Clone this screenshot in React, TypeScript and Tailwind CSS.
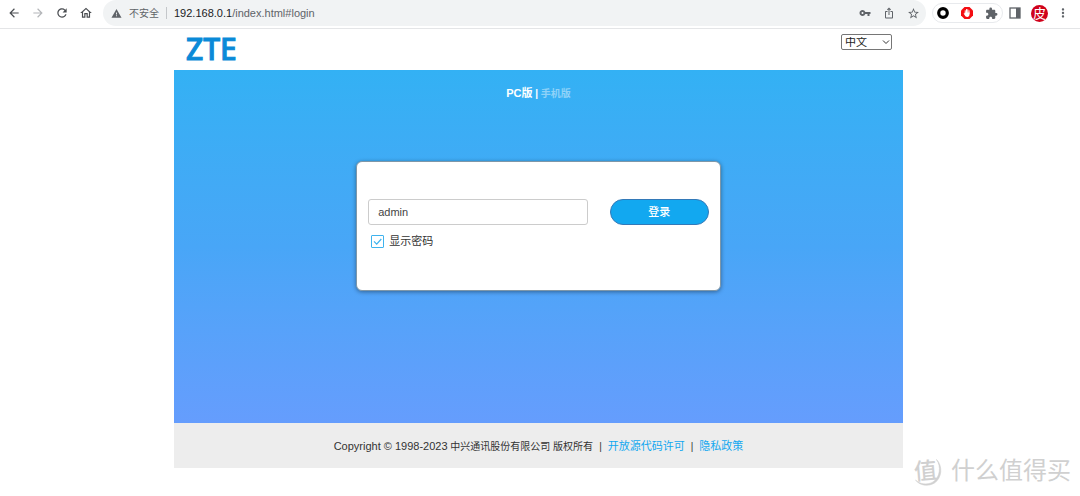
import React, { useState } from "react";
import {
  MdArrowBack,
  MdArrowForward,
  MdExtension,
  MdIosShare,
  MdMoreVert,
  MdOutlineHome,
  MdRefresh,
  MdStarBorder,
  MdVpnKey,
  MdWarning,
} from "react-icons/md";

const BlockerIcon: React.FC = () => (
  <svg viewBox="0 0 24 24" className="h-3 w-3" aria-hidden="true">
    <path d="M7 0h10l7 7v10l-7 7H7l-7-7V7z" fill="#f40d12" />
    <path
      d="M8.5 13V7.5M11 12V5M13.5 12V5.5M16 13V7.5"
      stroke="#fff"
      strokeWidth="2"
      strokeLinecap="round"
    />
    <path
      d="M7.5 11h9.5v4c0 3-2 5-4.5 5-2.5 0-4-1.5-5-3.5L5.5 13.5c0-1.2 1.2-1.2 2 0z"
      fill="#fff"
    />
  </svg>
);

const SidePanelIcon: React.FC = () => (
  <svg viewBox="0 0 12 12" className="h-3 w-3" aria-hidden="true">
    <rect x="1" y="1" width="10" height="10" fill="none" stroke="#5f6368" strokeWidth="1.3" />
    <rect x="7" y="1" width="4" height="10" fill="#5f6368" />
  </svg>
);

const BrowserBar: React.FC = () => {
  const [url, setUrl] = useState<string>("/index.html#login");
  return (
    <div className="flex h-[29px] items-start border-b border-[#e4e5e7] bg-white pl-[7px] text-[#5f6368]">
      <div className="flex h-[26px] items-center gap-[10px]">
        <button type="button" aria-label="后退">
          <MdArrowBack size={14} color="#4a4d51" />
        </button>
        <button type="button" aria-label="前进">
          <MdArrowForward size={14} color="#b4b6b9" />
        </button>
        <button type="button" aria-label="刷新">
          <MdRefresh size={14} color="#4a4d51" />
        </button>
        <button type="button" aria-label="主页">
          <MdOutlineHome size={14} color="#4a4d51" />
        </button>
      </div>
      <div className="ml-[10px] flex h-[26px] min-w-0 flex-1 items-center rounded-full bg-[#f1f3f4] pr-1.5 pl-2 text-[11px]">
        <MdWarning size={11} />
        <span className="ml-[7px] text-[10px]">不安全</span>
        <span className="mx-[7px] h-3 w-px bg-[#c4c7ca]" />
        <span className="text-[#202124]">192.168.0.1</span>
        <input
          aria-label="地址"
          value={url}
          onChange={(e) => setUrl(e.target.value)}
          className="min-w-0 flex-1 bg-transparent outline-none"
        />
        <div className="flex items-center gap-3">
          <button type="button" aria-label="密码">
            <MdVpnKey size={12} />
          </button>
          <button type="button" aria-label="分享">
            <MdIosShare size={12} />
          </button>
          <button type="button" aria-label="收藏">
            <MdStarBorder size={13} />
          </button>
        </div>
      </div>
      <div className="ml-1.5 flex h-[26px] items-center gap-1.5">
        <div className="flex h-5 items-center gap-3 rounded-full border border-[#e8eaed] px-1">
          <svg viewBox="0 0 12 12" className="h-3 w-3" aria-hidden="true">
            <circle cx="6" cy="6" r="4.3" fill="none" stroke="#000" strokeWidth="3.2" />
          </svg>
          <BlockerIcon />
          <MdExtension size={13} />
        </div>
        <SidePanelIcon />
        <span className="ml-1 flex h-[17px] w-[17px] items-center justify-center rounded-full bg-[#d0021b] text-[13px] leading-none text-white">
          皮
        </span>
      </div>
      <button type="button" aria-label="菜单" className="mr-2.5 ml-2 h-[26px]">
        <MdMoreVert size={14} />
      </button>
    </div>
  );
};

const LoginCard: React.FC = () => {
  const [password, setPassword] = useState<string>("admin");
  const [show, setShow] = useState<boolean>(true);
  return (
    <form
      onSubmit={(e) => e.preventDefault()}
      className="mx-auto w-1/2 rounded-md border border-[#7f97a8] bg-white px-[11px] pt-[37px] pb-[41px] shadow-[0_1px_4px_rgba(0,0,0,0.4)]"
    >
      <div className="flex gap-[22px]">
        <input
          aria-label="密码"
          type={show ? "text" : "password"}
          value={password}
          onChange={(e) => setPassword(e.target.value)}
          className="h-[26px] min-w-0 flex-1 rounded-[3px] border border-[#ccc] px-[9px] text-[11px] text-[#444] outline-none"
        />
        <button
          type="submit"
          className="h-[26px] w-[99px] rounded-full border border-[#3379b8] bg-[#12a8f0] text-[11px] font-medium text-white"
        >
          登录
        </button>
      </div>
      <label className="mt-2 ml-[3px] flex h-4 w-fit items-center gap-[5px] text-[11px] text-[#333]">
        <span className="grid h-[13px] w-[13px]">
          <input
            type="checkbox"
            checked={show}
            onChange={(e) => setShow(e.target.checked)}
            className="peer col-start-1 row-start-1 appearance-none rounded-[1px] border border-[#3fb3ee] bg-white"
          />
          <svg
            viewBox="0 0 13 13"
            className="pointer-events-none invisible col-start-1 row-start-1 peer-checked:visible"
            aria-hidden="true"
          >
            <path d="M3 6.3l2.7 2.9L10.3 4" fill="none" stroke="#3fb3ee" strokeWidth="1.2" />
          </svg>
        </span>
        显示密码
      </label>
    </form>
  );
};

const Watermark: React.FC = () => (
  <div className="pointer-events-none absolute right-[9px] bottom-[9px] flex items-center gap-2 text-[#d0d0d0]">
    <svg viewBox="0 0 32 32" className="h-8 w-8" aria-hidden="true">
      <path
        d="M25.5 4.500C32 11 31 23 23.500 28C17 32 8.500 30.500 4.500 25C8.500 29 16 30.500 22 27C29 22.500 30.500 11.500 25.500 4.500z"
        fill="currentColor"
        stroke="currentColor"
        strokeWidth="0.6"
      />
      <text
        x="3"
        y="24"
        fontSize="23"
        fontWeight="500"
        fill="currentColor"
        transform="rotate(-5 15 16)"
      >
        值
      </text>
    </svg>
    <span className="text-2xl leading-8">什么值得买</span>
  </div>
);

const App: React.FC = () => {
  const [lang, setLang] = useState<string>("zh");
  return (
    <div className="relative min-h-screen bg-white font-['Liberation_Sans','Noto_Sans_CJK_SC',sans-serif] text-[10px]">
      <BrowserBar />
      <div className="pr-[3px]">
        <main className="mx-auto w-[67.7%]">
          <header className="flex h-[41px] items-start justify-between pt-[5px] pr-[11px] pl-3">
            <h1 className="font-['Noto_Sans',sans-serif] text-[30px] leading-[30px] font-medium text-[#0a8ad8] [-webkit-text-stroke:1px_#0a8ad8]">
              ZTE
            </h1>
            <div className="grid h-4 w-[51px] grid-cols-1">
              <select
                aria-label="语言"
                value={lang}
                onChange={(e) => setLang(e.target.value)}
                className="col-start-1 row-start-1 w-full min-w-0 appearance-none rounded-xs border border-[#767676] bg-white pl-[3px] text-[11px] leading-none text-[#222]"
              >
                <option value="zh">中文</option>
                <option value="en">English</option>
              </select>
              <svg
                viewBox="0 0 8 8"
                className="pointer-events-none col-start-1 row-start-1 mr-0.5 h-2 w-2 self-center justify-self-end"
                aria-hidden="true"
              >
                <path d="M1 2.5l3 3 3-3" fill="none" stroke="#333" strokeWidth="1" />
              </svg>
            </div>
          </header>
          <section className="h-[353px] bg-linear-to-b from-[#33b1f4] via-[#48a6f7] to-[#659dfd]">
            <nav className="mb-[59px] pt-[15px] text-center text-[10px] leading-4 font-bold text-white">
              <a href="#login" className="text-[11px]">
                PC版
              </a>{" "}
              |{" "}
              <a href="#mobile" className="text-[#8fd2f8]">
                手机版
              </a>
            </nav>
            <LoginCard />
          </section>
          <footer className="flex h-[45px] items-center justify-center gap-1.5 bg-[#ededed] pt-0.5 text-[#333]">
            <p>
              <span className="text-[11px]">Copyright © 1998-2023</span> 中兴通讯股份有限公司 版权所有
            </p>
            <span>|</span>
            <a href="#opensource" className="text-[11px] text-[#12a8f0]">
              开放源代码许可
            </a>
            <span>|</span>
            <a href="#privacy" className="text-[11px] text-[#12a8f0]">
              隐私政策
            </a>
          </footer>
        </main>
      </div>
      <Watermark />
    </div>
  );
};

export default App;
